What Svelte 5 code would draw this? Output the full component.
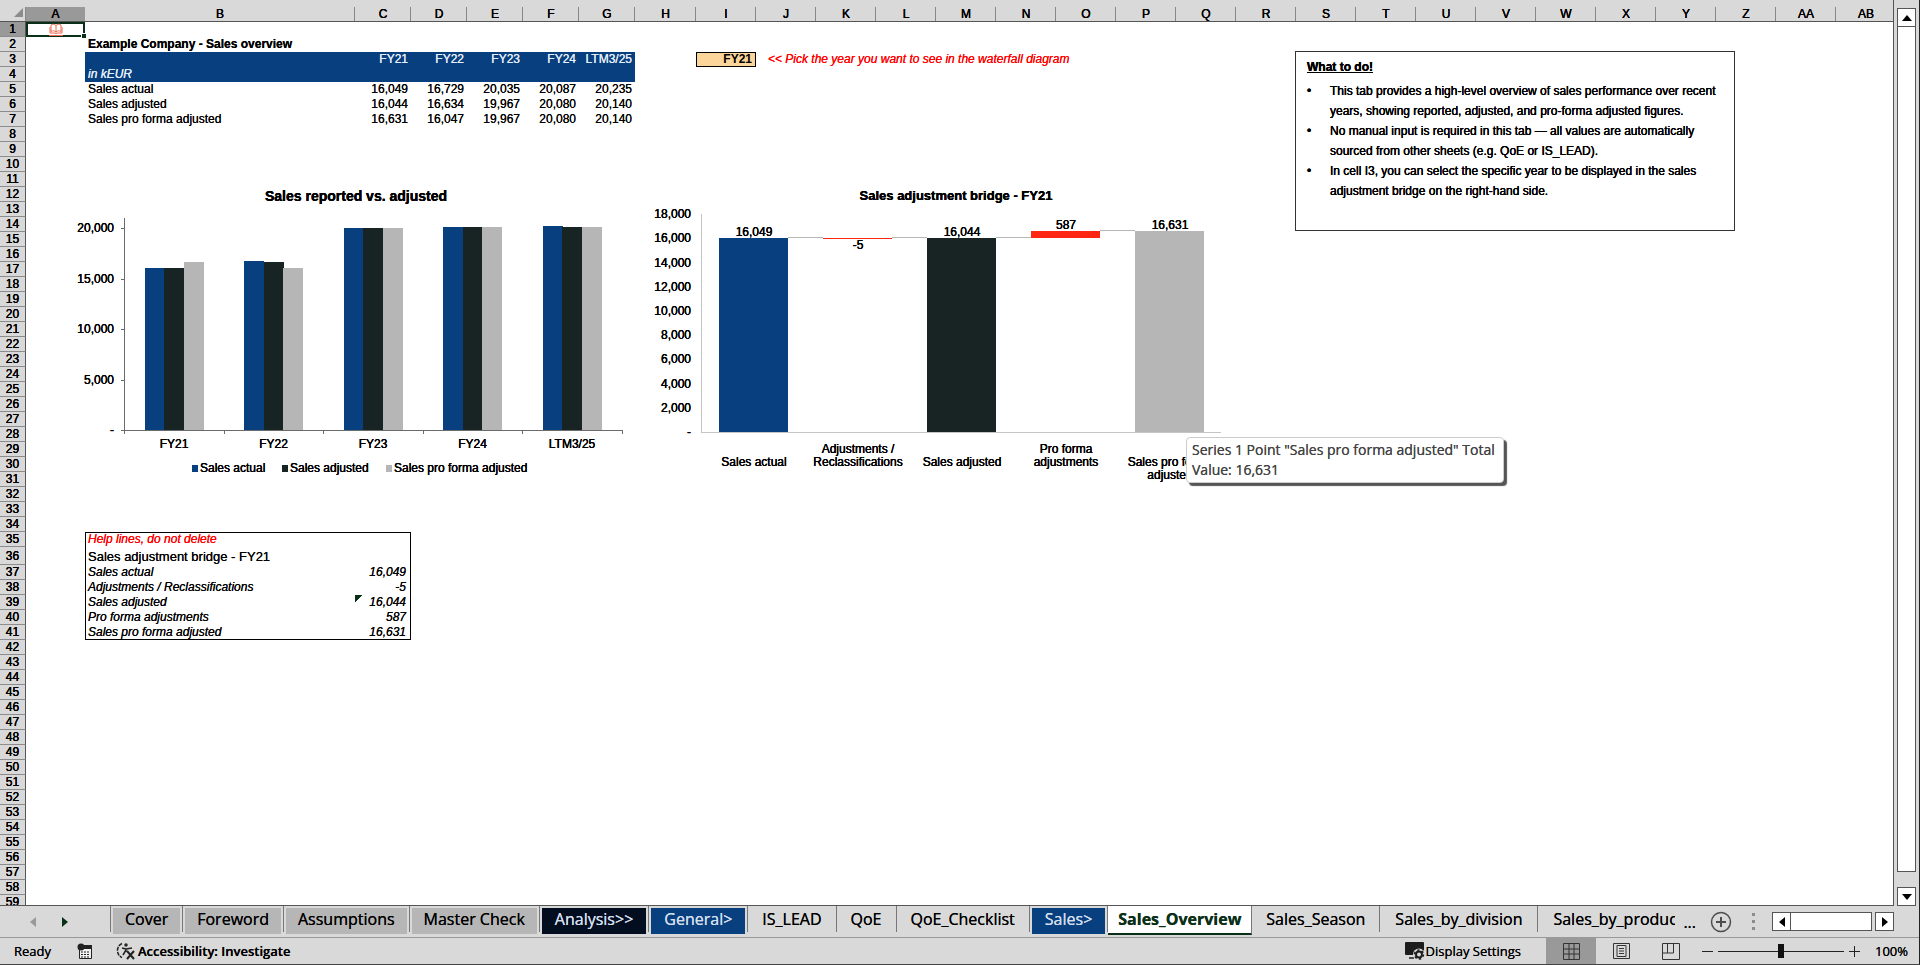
<script lang="ts">
    type Cell = { text: string; cls?: string };

    const letters = [...'ABCDEFGHIJKLMNOPQRSTUVWXYZ', 'AA', 'AB'];
    const rows = Array.from({ length: 59 }, (_, i) => i + 1);
    const years = ['FY21', 'FY22', 'FY23', 'FY24', 'LTM3/25'];
    const series = [
        { name: 'Sales actual', color: '#083f7f', x: 192, values: [16049, 16729, 20035, 20087, 20235] },
        { name: 'Sales adjusted', color: '#182423', x: 282, values: [16044, 16634, 19967, 20080, 20140] },
        { name: 'Sales pro forma adjusted', color: '#b6b6b6', x: 386, values: [16631, 16047, 19967, 20080, 20140] }
    ];
    const tabs = [
        { name: 'Cover', cls: 'grey' },
        { name: 'Foreword', cls: 'grey' },
        { name: 'Assumptions', cls: 'grey' },
        { name: 'Master Check', cls: 'grey' },
        { name: 'Analysis>>', cls: 'navy' },
        { name: 'General>', cls: 'blue' },
        { name: 'IS_LEAD', cls: '' },
        { name: 'QoE', cls: '' },
        { name: 'QoE_Checklist', cls: '' },
        { name: 'Sales>', cls: 'blue' },
        { name: 'Sales_Overview', cls: '' },
        { name: 'Sales_Season', cls: '' },
        { name: 'Sales_by_division', cls: 'wide' },
        { name: 'Sales_by_product', cls: 'wide cut' }
    ];

    let year = $state('FY21');
    let activeTab = $state('Sales_Overview');
    let zoom = $state(100);

    const fmt = (n: number) => n.toLocaleString('en-US');

    let bridge = $derived.by(() => {
        const i = years.indexOf(year);
        const [actual, adjusted, proForma] = series.map((s) => s.values[i]);
        return [
            { label: ['Sales actual'], from: 0, to: actual, value: actual, color: '#083f7f' },
            { label: ['Adjustments /', 'Reclassifications'], from: actual, to: adjusted, value: adjusted - actual, color: '#ff2614' },
            { label: ['Sales adjusted'], from: 0, to: adjusted, value: adjusted, color: '#182423' },
            { label: ['Pro forma', 'adjustments'], from: adjusted, to: proForma, value: proForma - adjusted, color: '#ff2614' },
            { label: ['Sales pro forma', 'adjusted'], from: 0, to: proForma, value: proForma, color: '#b6b6b6' }
        ];
    });

    let cells = $derived.by(() => {
        const c: Record<string, Cell> = {
            B2: { text: 'Example Company - Sales overview', cls: 'bold' },
            B4: { text: 'in kEUR', cls: 'italic' },
            J3: { text: '<< Pick the year you want to see in the waterfall diagram', cls: 'italic red indent' },
            B35: { text: 'Help lines, do not delete', cls: 'italic red' },
            B36: { text: 'Sales adjustment bridge - ' + year, cls: 'large' }
        };
        years.forEach((y, i) => {
            c['CDEFG'[i] + 3] = { text: y, cls: 'num' };
            series.forEach((s, j) => (c['CDEFG'[i] + (5 + j)] = { text: fmt(s.values[i]), cls: 'num' }));
        });
        series.forEach((s, j) => (c['B' + (5 + j)] = { text: s.name }));
        bridge.forEach((b, j) => {
            const name = j === 4 ? 'Sales pro forma adjusted' : b.label.join(' ');
            c['B' + (37 + j)] = { text: name, cls: 'italic' };
            c['C' + (37 + j)] = { text: fmt(b.value), cls: 'num italic' + (j === 2 ? ' flag' : '') };
        });
        return c;
    });

    function colClass(l: string) {
        if (l === 'A' || l === 'B' || l === 'H') return 'c-' + l.toLowerCase();
        return l.length === 1 && l <= 'G' ? 'c-num' : 'c-std';
    }

    function range(col: string, row: number) {
        let cls = '';
        if ((row === 3 || row === 4) && col >= 'B' && col <= 'G' && col.length === 1) cls += ' head';
        if (row >= 35 && row <= 41 && (col === 'B' || col === 'C')) {
            cls += col === 'B' ? ' edge-l' : ' edge-r';
            if (row === 35) cls += ' edge-t';
            if (row === 41) cls += ' edge-b';
        }
        return cls;
    }

    // value to pixel row in each chart
    const y1 = (v: number) => Math.round(430 - (v / 5000) * 50.5);
    const y2 = (v: number) => Math.round(432 - (v / 2000) * 24.2);
    const x1 = (i: number) => 125 + i * 99.5;
    const x2 = (i: number) => 701 + i * 104;
</script>

<div class="app">
    <div class="work">
        <main class="sheet">
            <table>
                <colgroup>
                    <col class="c-row" />
                    {#each letters as l}
                        <col class={colClass(l)} />
                    {/each}
                </colgroup>
                <thead>
                    <tr>
                        <th class="corner"><svg width="9" height="9"><path d="M9 0V9H0z" fill="#8c8c8c" /></svg></th>
                        {#each letters as l}
                            <th class:on={l === 'A'}>{l}</th>
                        {/each}
                    </tr>
                </thead>
                <tbody>
                    {#each rows as r}
                        <tr class:tall={r === 36}>
                            <th class:on={r === 1}>{r}</th>
                            {#each letters as l}
                                {#if l + r === 'A1'}
                                    <td class="selected">
                                        <a href="#cover" aria-label="Contents">
                                            <svg width="14" height="13" viewBox="0 0 14 13" fill="none" stroke="#ee6a50">
                                                <path d="M7 2.500C5.500 1 3.500 1 2 2v6.500c1.500-1 3.500-1 5 .5c1.500-1.500 3.500-1.500 5-.5V2C10.500 1 8.500 1 7 2.500zM7 2.500V9M1 4v6h5l1 .5l1-.5h5V4" />
                                                <path d="M0 12.500h14" />
                                            </svg>
                                        </a>
                                    </td>
                                {:else if l + r === 'I3'}
                                    <td class="pick">
                                        <select bind:value={year} aria-label="Year in waterfall diagram">
                                            {#each years as y}<option>{y}</option>{/each}
                                        </select>
                                    </td>
                                {:else}
                                    <td class="{cells[l + r]?.cls ?? ''}{range(l, r)}">{cells[l + r]?.text ?? ''}</td>
                                {/if}
                            {/each}
                        </tr>
                    {/each}
                </tbody>
            </table>

            <!-- charts share the sheet's coordinate space -->
            <svg class="charts" width="1240" height="490" viewBox="0 0 1240 490">
                <text class="title" x="356" y="201">Sales reported vs. adjusted</text>
                {#each years as label, i}
                    {#each series as s, j}
                        <rect x={Math.floor(x1(i) + 20 + j * 19.5)} y={y1(s.values[i])} width="20" height={430 - y1(s.values[i])} fill={s.color} />
                    {/each}
                    <text x={x1(i) + 49} y="448">{label}</text>
                {/each}
                <path d="M124.500 218V430.500H623M121 228.500h4M121 279.500h4M121 329.500h4M121 380.500h4M121 430.500h4" stroke="#6b6b6b" fill="none" />
                {#each [0, 1, 2, 3, 4, 5] as i}
                    <path d="M{Math.round(x1(i)) - 0.5} 430v4" stroke="#6b6b6b" />
                {/each}
                {#each [0, 5000, 10000, 15000, 20000] as v}
                    <text class="axis" x="114" y={y1(v) + 4}>{v ? fmt(v) : '-'}</text>
                {/each}
                {#each series as s}
                    <rect x={s.x} y="465" width="6" height="7" fill={s.color} />
                    <text class="legend" x={s.x + 8} y="472">{s.name}</text>
                {/each}

                <text class="title small" x="956" y="200">Sales adjustment bridge - {year}</text>
                <path d="M701.500 214V432.500H1221" stroke="#c4c4c4" fill="none" />
                {#each [0, 2000, 4000, 6000, 8000, 10000, 12000, 14000, 16000, 18000] as v}
                    <text class="axis" x="691" y={y2(v) + 4}>{v ? fmt(v) : '-'}</text>
                {/each}
                {#each bridge as b, i}
                    {@const top = y2(Math.max(b.from, b.to))}
                    <rect x={x2(i) + 18} y={top} width="69" height={Math.max(1, y2(Math.min(b.from, b.to)) - top)} fill={b.color} />
                    {#if i < 4}
                        <path d="M{x2(i) + 87} {y2(b.to) - 0.5}h35" stroke="#b6b6b6" />
                    {/if}
                    <text x={x2(i) + 53} y={b.value < 0 ? top + 11 : top - 2}>{fmt(b.value)}</text>
                    {#each b.label as line, n}
                        <text x={x2(i) + 53} y={466 + (b.label.length === 1 || i === 4 ? n : n - 1) * 13}>{line}</text>
                    {/each}
                {/each}
            </svg>

            <section class="note">
                <h2>What to do!</h2>
                <ul>
                    <li>This tab provides a high-level overview of sales performance over recent years, showing reported, adjusted, and pro-forma adjusted figures.</li>
                    <li>No manual input is required in this tab — all values are automatically sourced from other sheets (e.g. QoE or IS_LEAD).</li>
                    <li>In cell I3, you can select the specific year to be displayed in the sales adjustment bridge on the right-hand side.</li>
                </ul>
            </section>

            <div class="tooltip" role="tooltip">
                Series 1 Point "Sales pro forma adjusted" Total<br />Value: 16,631
            </div>
        </main>
        <div class="vscroll">
            <button aria-label="Scroll up"><svg width="10" height="6"><path d="M5 0l5 6H0z" /></svg></button>
            <div class="vthumb"></div>
            <button aria-label="Scroll down"><svg width="10" height="6"><path d="M0 0h10L5 6z" /></svg></button>
        </div>
    </div>

    <nav class="tabbar">
        <div class="arrows">
            <button aria-label="Previous sheets"><svg width="6" height="10"><path d="M6 0v10L0 5z" fill="#999" /></svg></button>
            <button aria-label="Next sheets"><svg width="6" height="10"><path d="M0 0l6 5l-6 5z" fill="#0b3018" /></svg></button>
        </div>
        <div class="tabs">
            {#each tabs as t}
                <button class="tab {t.cls}" class:active={t.name === activeTab} onclick={() => (activeTab = t.name)}><span>{t.name}</span></button>
            {/each}
        </div>
        <span class="more">...</span>
        <button class="add" aria-label="New sheet">
            <svg width="22" height="22" fill="none" stroke="#4d4d4d"><circle cx="11" cy="11" r="9.500" stroke-width="1.500" /><path d="M11 6v10M6 11h10" stroke-width="2" /></svg>
        </button>
        <svg class="grip" width="3" height="17" fill="#8c8c8c"><path d="M0 0h3v3H0zM0 7h3v3H0zM0 14h3v3H0z" /></svg>
        <div class="hscroll">
            <button aria-label="Scroll left"><svg width="6" height="10"><path d="M6 0v10L0 5z" /></svg></button>
            <div class="hthumb"></div>
            <button aria-label="Scroll right"><svg width="6" height="10"><path d="M0 0l6 5l-6 5z" /></svg></button>
        </div>
    </nav>

    <footer class="status">
        <span class="ready">Ready</span>
        <button class="macro" aria-label="Record macro">
            <svg width="16" height="16"><path d="M2.500 4.500h12v11h-12z" fill="#f2f2f2" stroke="#222" /><path d="M6 2h9v4H6z" fill="#222" /><circle cx="4" cy="4" r="3.500" fill="#222" /><path d="M4 9h9M4 11.500h9M4 14h9" stroke="#222" stroke-dasharray="2 1" /></svg>
        </button>
        <button class="access">
            <svg width="20" height="18" fill="none" stroke="#222" stroke-width="1.500"><path d="M6 1.500C0 4 0 13 6 15.500" stroke-dasharray="4 1" /><circle cx="10" cy="3" r="1" /><path d="M6 6l4 1l6-1M10 7v3M10 8l-3 5" /><path d="M11 9l7 8M18 9l-7 8" stroke-width="2" /></svg>
            <b>Accessibility: Investigate</b>
        </button>
        <button class="display">
            <svg width="20" height="18"><path d="M1 0h17q1 0 1 1v9H9v3H1q-1 0-1-1V1q0-1 1-1z" fill="#1c1c1c" /><path d="M4 16h5" stroke="#1c1c1c" stroke-width="1.500" /><circle cx="14" cy="12.500" r="6" fill="#d9d9d9" /><circle cx="14" cy="12.500" r="3" fill="none" stroke="#1c1c1c" stroke-width="2" /><circle cx="14" cy="12.500" r="4.500" fill="none" stroke="#1c1c1c" stroke-width="1.500" stroke-dasharray="2.300 2.400" /></svg>
            Display Settings
        </button>
        <div class="views">
            <button class="on" aria-label="Normal view"><svg width="17" height="17" fill="none" stroke="#333"><path d="M.5 .5h16v16H.5zM.5 6h16M.5 11h16M6 .5v16M11 .5v16" /></svg></button>
            <button aria-label="Page layout"><svg width="17" height="17" fill="none" stroke="#333"><path d="M.5 .5h16v15H.5zM4 2.500h9v11H4zM6 5.500h5M6 8h5M6 10.500h5" /></svg></button>
            <button aria-label="Page break preview"><svg width="18" height="17" fill="none" stroke="#333"><path d="M.5 .5h17v16H.5zM5.500 .5v9.500h6V.5M.5 10h5" /></svg></button>
        </div>
        <button class="step" aria-label="Zoom out" onclick={() => (zoom -= 10)}><svg width="11" height="11"><path d="M0 5.500h11" stroke="#222" /></svg></button>
        <input type="range" min="0" max="200" bind:value={zoom} aria-label="Zoom" />
        <button class="step" aria-label="Zoom in" onclick={() => (zoom += 10)}><svg width="11" height="11"><path d="M0 5.500h11M5.500 0v11" stroke="#222" /></svg></button>
        <span class="percent">{zoom}%</span>
    </footer>
</div>

<style>
    :global(body) {
        margin: 0;
        background: #d9d9d9;
    }

    .app {
        height: 100vh;
        display: flex;
        flex-direction: column;
        box-sizing: border-box;
        border-right: 1px solid #222;
        border-bottom: 1px solid #444;
        background: #d9d9d9;
        font-family: 'Open Sans', 'Noto Sans', sans-serif;
        color: #000;
        text-shadow: 0 0 0 currentColor;
        overflow: hidden;
    }

    button {
        display: flex;
        align-items: center;
        justify-content: center;
        padding: 0;
        border: 0;
        background: none;
        font: inherit;
        color: inherit;
        text-shadow: inherit;
        white-space: nowrap;
    }

    .work {
        flex: 1;
        display: flex;
        min-height: 0;
        padding-right: 3px;
    }

    .sheet {
        position: relative;
        flex: 1;
        min-width: 0;
        overflow: hidden;
        background: #fff;
        border-right: 1px solid #555;
        border-bottom: 1px solid #555;
        font-family: 'Liberation Sans', Arial, sans-serif;
        font-size: 12px;
        color: #000;
    }

    table {
        width: 1896px;
        table-layout: fixed;
        border-collapse: separate;
        border-spacing: 0;
    }

    .c-row {
        width: 26px;
    }

    .c-a {
        width: 59px;
    }

    .c-b {
        width: 270px;
    }

    .c-num {
        width: 56px;
    }

    .c-h {
        width: 61px;
    }

    .c-std {
        width: 60px;
    }

    th {
        box-sizing: border-box;
        padding: 0;
        background: #d9d9d9;
        font-weight: 400;
        text-shadow: 0 0 0 #000, 0 0 0 #000;
    }

    thead th {
        height: 22px;
        padding-top: 6px;
        line-height: 14px;
        border-bottom: 1px solid #555;
        background: linear-gradient(#888, #888) right bottom / 1px 14px no-repeat #d9d9d9;
    }

    thead th.on {
        background: linear-gradient(#d9d9d9 7px, #999 7px);
    }

    thead .corner {
        vertical-align: bottom;
        text-align: right;
        padding-right: 3px;
    }

    .corner svg {
        display: block;
        margin: 0 0 4px auto;
    }

    tbody th {
        border-right: 1px solid #555;
        border-bottom: 1px solid #8c8c8c;
        height: 15px;
        line-height: 14px;
    }

    tbody th.on {
        background: #999;
    }

    td {
        height: 15px;
        padding: 0 3px;
        line-height: 15px;
        white-space: nowrap;
    }

    .tall th,
    .tall td {
        height: 18px;
    }

    .bold {
        font-weight: 700;
    }

    .italic {
        font-style: italic;
    }

    .red {
        color: #f00;
    }

    .indent {
        padding-left: 12px;
    }

    .large {
        font-size: 13px;
    }

    .num {
        text-align: right;
    }

    .head {
        background: #083f7f;
        color: #e6eef8;
    }

    .edge-l {
        box-shadow: inset 1px 0 #000;
    }

    .edge-r {
        padding-right: 5px;
        box-shadow: inset -1px 0 #000;
    }

    .edge-l.edge-t {
        box-shadow: inset 1px 1px #000;
    }

    .edge-r.edge-t {
        box-shadow: inset -1px 1px #000;
    }

    .edge-l.edge-b {
        box-shadow: inset 1px -1px #000;
    }

    .edge-r.edge-b {
        box-shadow: inset -1px -1px #000;
    }

    .flag {
        background: linear-gradient(135deg, #0b3018 5px, transparent 5px) no-repeat;
    }

    .selected {
        position: relative;
        padding: 0;
        box-shadow: inset 0 0 0 2px #0b3018;
    }

    .selected::after {
        content: '';
        position: absolute;
        right: -2px;
        bottom: -2px;
        width: 4px;
        height: 4px;
        border: 1px solid #fff;
        background: #0b3018;
    }

    .selected svg {
        display: block;
        margin: 0 auto;
    }

    .pick {
        padding: 0;
    }

    select {
        display: block;
        box-sizing: border-box;
        width: 100%;
        height: 15px;
        padding: 0 3px 0 0;
        appearance: none;
        border: 1px solid #000;
        border-radius: 0;
        background: #fcd59b;
        color: #000;
        font: bold 12px/13px 'Liberation Sans', Arial, sans-serif;
        text-align: right;
        text-align-last: right;
    }

    .charts {
        position: absolute;
        top: 0;
        left: 0;
        pointer-events: none;
        shape-rendering: crispEdges;
    }

    .charts text {
        font-size: 12px;
        text-anchor: middle;
        text-shadow: 0 0 0 #000, 0 0 0 #000;
    }

    .charts .title {
        font-size: 14px;
        font-weight: 700;
    }

    .charts .small {
        font-size: 13px;
    }

    .charts .axis {
        text-anchor: end;
    }

    .charts .legend {
        text-anchor: start;
    }

    .note {
        position: absolute;
        top: 51px;
        left: 1295px;
        box-sizing: border-box;
        width: 440px;
        height: 180px;
        padding: 7px 16px 8px 11px;
        border: 1px solid #333;
        background: #fff;
        text-shadow: 0 0 0 #000, 0 0 0 #000;
    }

    h2 {
        margin: 0 0 6px;
        font-size: 12px;
        line-height: 16px;
        text-decoration: underline;
    }

    ul {
        margin: 0;
        padding-left: 23px;
        list-style: none;
    }

    li {
        line-height: 20px;
    }

    li::before {
        content: '•';
        float: left;
        margin-left: -23px;
    }

    .tooltip {
        position: absolute;
        top: 437px;
        left: 1186px;
        padding: 2px 8px 2px 5px;
        border: 1px solid #ccc;
        border-radius: 4px;
        background: #fff;
        box-shadow: 3px 3px 1px #555;
        color: #444;
        font: 14px/20px 'Open Sans', 'Noto Sans', sans-serif;
        white-space: nowrap;
    }

    .vscroll {
        display: flex;
        flex-direction: column;
        width: 19px;
        margin-left: 3px;
        padding-top: 8px;
    }

    .vscroll button,
    .hscroll button,
    .vthumb,
    .hthumb {
        box-sizing: border-box;
        border: 1px solid #555;
        background: #fff;
    }

    .vscroll button {
        height: 19px;
    }

    .vthumb {
        flex: 1;
        margin-bottom: 15px;
        border-top: 0;
    }

    .tabbar {
        display: flex;
        align-items: center;
        height: 31px;
        padding-right: 25px;
        border-bottom: 1px solid #999;
        font-size: 16px;
    }

    .arrows {
        display: flex;
        gap: 26px;
        width: 80px;
        padding-left: 30px;
    }

    .tabs {
        display: flex;
        flex: 1;
        min-width: 0;
        align-self: stretch;
        overflow: hidden;
    }

    .tab {
        align-items: flex-start;
        height: 26px;
        padding: 2px 2px 0;
        border-right: 1px solid #777;
        line-height: 22px;
    }

    .tab:first-child {
        border-left: 1px solid #777;
    }

    .tab span {
        padding: 0 12px;
        height: 26px;
    }

    .grey span {
        background: #b6b6b6;
    }

    .navy span,
    .blue span {
        padding: 0 13px;
        background: #083f7f;
        color: #d4dfec;
    }

    .navy span {
        background: #030d20;
    }

    .wide span {
        padding: 0 13px;
    }

    .cut {
        flex: 0 1 138px;
        min-width: 0;
        justify-content: flex-start;
        overflow: hidden;
        border-right: 0;
    }

    .tab.active {
        margin-top: -1px;
        height: 30px;
        padding: 3px 0 0;
        box-sizing: border-box;
        border-bottom: 2px solid #0b3018;
        background: #fff;
        color: #0b3018;
        font-weight: 700;
    }

    .active span {
        padding: 0 10px;
    }

    .more {
        margin: 0 14px 0 8px;
    }

    .grip {
        margin: 0 17px 0 20px;
    }

    .hscroll {
        display: flex;
        width: 122px;
        height: 19px;
    }

    .hscroll button {
        width: 19px;
    }

    .hthumb {
        flex: 1;
        margin-right: 3px;
        border-left: 0;
    }

    .status {
        display: flex;
        align-items: center;
        height: 26px;
        padding-right: 11px;
        font-size: 13px;
    }

    .ready {
        width: 63px;
        padding-left: 14px;
        box-sizing: border-box;
    }

    .macro {
        margin: 0 23px 0 14px;
    }

    .access {
        gap: 2px;
    }

    b {
        font-weight: 600;
    }

    .display {
        gap: 1px;
        margin-left: auto;
    }

    .views {
        display: flex;
        align-self: stretch;
        margin: 0 6px 0 25px;
    }

    .views button {
        width: 50px;
    }

    .views .on {
        background: #999;
    }

    .step {
        width: 11px;
    }

    input {
        width: 126px;
        height: 14px;
        margin: 0 5px;
        appearance: none;
        background: linear-gradient(#222, #222) center / 100% 1px no-repeat;
    }

    input::-webkit-slider-thumb {
        appearance: none;
        width: 6px;
        height: 14px;
        background: #111;
    }

    .percent {
        width: 48px;
        text-align: right;
    }
</style>
